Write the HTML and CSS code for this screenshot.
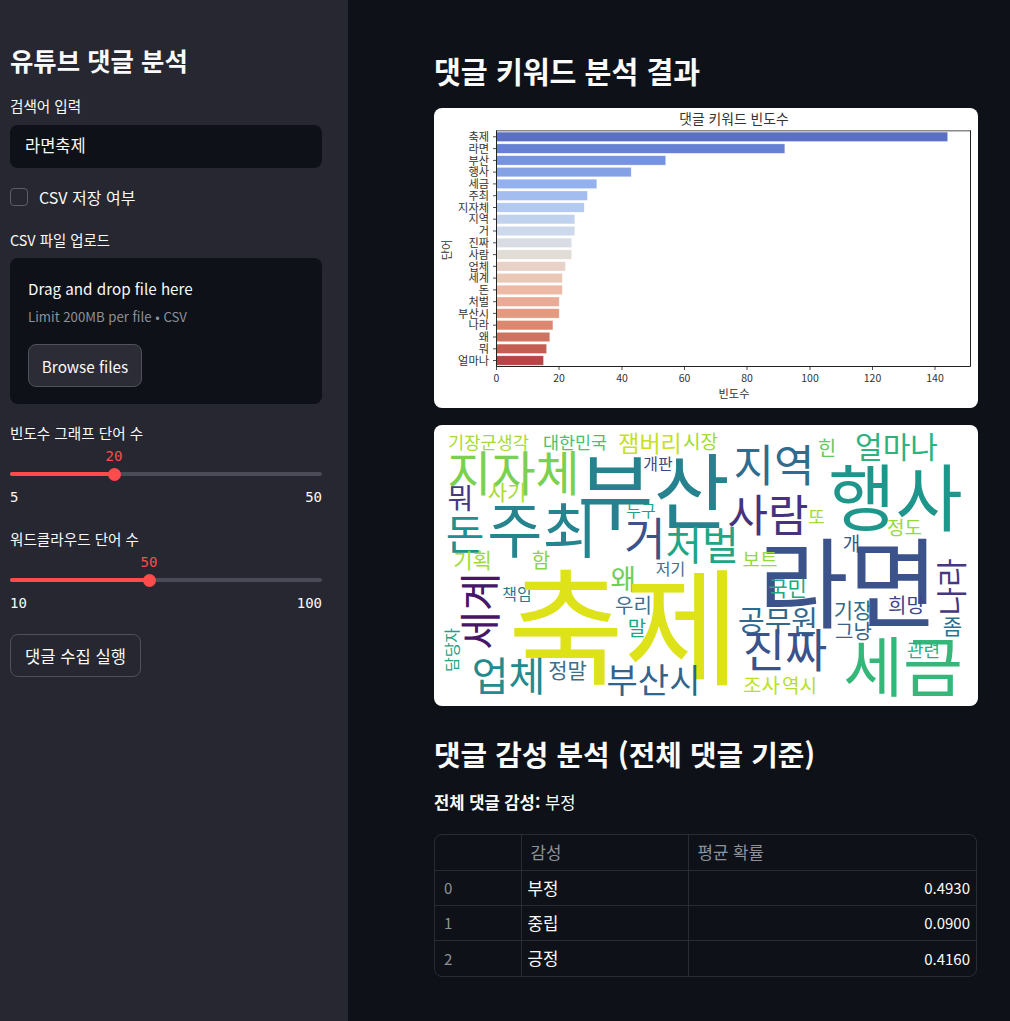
FILE: index.html
```html
<!DOCTYPE html>
<html lang="ko">
	<head>
		<meta charset="UTF-8">
		<title>유튜브 댓글 분석</title>
		<link rel="stylesheet" href="styles.css">
	</head>
	<body>
		<aside class="sidebar">
			<h2 class="side-title">유튜브 댓글 분석</h2>

			<label class="field-label label-search">검색어 입력</label>
			<div class="text-input">라면축제</div>

			<div class="check-row">
				<span class="check-box"></span>
				<span>CSV 저장 여부</span>
			</div>

			<label class="field-label label-upload">CSV 파일 업로드</label>
			<div class="uploader">
				<div class="drop-title">Drag and drop file here</div>
				<div class="drop-limit">Limit 200MB per file • CSV</div>
				<div class="btn btn-browse">Browse files</div>
			</div>

			<label class="field-label label-slider-a">빈도수 그래프 단어 수</label>
			<div class="slider">
				<div class="slider-value value-a">20</div>
				<div class="slider-track">
					<div class="slider-fill fill-a"><span class="slider-thumb"></span></div>
				</div>
				<div class="slider-range"><span>5</span><span>50</span></div>
			</div>

			<label class="field-label label-slider-b">워드클라우드 단어 수</label>
			<div class="slider">
				<div class="slider-value value-b">50</div>
				<div class="slider-track">
					<div class="slider-fill fill-b"><span class="slider-thumb"></span></div>
				</div>
				<div class="slider-range"><span>10</span><span>100</span></div>
			</div>

			<div class="btn btn-run">댓글 수집 실행</div>
		</aside>

		<main class="content">
			<h1 class="page-title">댓글 키워드 분석 결과</h1>

			<div class="figure figure-chart">
				<svg class="chart" viewBox="434 108 544 300" width="544" height="300">
					<text class="chart-title" x="734" y="124">댓글 키워드 빈도수</text>

					<g class="bars">
						<rect x="496.5" y="132.1" width="451.2" height="9.4" fill="#5b70c4"/>
						<rect x="496.5" y="143.9" width="288.3" height="9.4" fill="#6680d3"/>
						<rect x="496.5" y="155.7" width="169.2" height="9.4" fill="#7593e1"/>
						<rect x="496.5" y="167.4" width="134.7" height="9.4" fill="#85a1e6"/>
						<rect x="496.5" y="179.2" width="100.3" height="9.4" fill="#93b1ee"/>
						<rect x="496.5" y="191" width="90.9" height="9.4" fill="#a3bdf0"/>
						<rect x="496.5" y="202.8" width="87.7" height="9.4" fill="#b2c9f1"/>
						<rect x="496.5" y="214.5" width="78.3" height="9.4" fill="#c1d2ee"/>
						<rect x="496.5" y="226.3" width="78.3" height="9.4" fill="#cdd9ea"/>
						<rect x="496.5" y="238.1" width="75.2" height="9.4" fill="#d9dde3"/>
						<rect x="496.5" y="249.9" width="75.2" height="9.4" fill="#e2dcd7"/>
						<rect x="496.5" y="261.6" width="68.9" height="9.4" fill="#e8d1c6"/>
						<rect x="496.5" y="273.4" width="65.8" height="9.4" fill="#e9c8b6"/>
						<rect x="496.5" y="285.2" width="65.8" height="9.4" fill="#ecbaa4"/>
						<rect x="496.5" y="297" width="62.7" height="9.4" fill="#e8ab95"/>
						<rect x="496.5" y="308.7" width="62.7" height="9.4" fill="#e49a80"/>
						<rect x="496.5" y="320.5" width="56.4" height="9.4" fill="#dc8871"/>
						<rect x="496.5" y="332.3" width="53.3" height="9.4" fill="#cf7361"/>
						<rect x="496.5" y="344.1" width="50.1" height="9.4" fill="#c45e52"/>
						<rect x="496.5" y="355.8" width="47" height="9.4" fill="#b64548"/>
					</g>

					<path class="spine-top" d="M496 130.8H971"/>
					<path class="spine" d="M496.5 130.5V366.5H970.5V130.5"/>
					<path class="ticks" d="M493 136.8h3M493 148.6h3M493 160.4h3M493 172.1h3M493 183.9h3M493 195.7h3M493 207.5h3M493 219.2h3M493 231h3M493 242.8h3M493 254.6h3M493 266.3h3M493 278.1h3M493 289.9h3M493 301.7h3M493 313.4h3M493 325.2h3M493 337h3M493 348.8h3M493 360.5h3M496.5 366v4M559 366v4M622 366v4M684.5 366v4M747 366v4M810 366v4M872.5 366v4M935 366v4"/>

					<g class="y-labels">
						<text x="489" y="141">축제</text>
						<text x="489" y="152.8">라면</text>
						<text x="489" y="164.6">부산</text>
						<text x="489" y="176.3">행사</text>
						<text x="489" y="188.1">세금</text>
						<text x="489" y="199.9">주최</text>
						<text x="489" y="211.7">지자체</text>
						<text x="489" y="223.4">지역</text>
						<text x="489" y="235.2">거</text>
						<text x="489" y="247">진짜</text>
						<text x="489" y="258.8">사람</text>
						<text x="489" y="270.5">업체</text>
						<text x="489" y="282.3">세계</text>
						<text x="489" y="294.1">돈</text>
						<text x="489" y="305.9">처벌</text>
						<text x="489" y="317.6">부산시</text>
						<text x="489" y="329.4">나라</text>
						<text x="489" y="341.2">왜</text>
						<text x="489" y="353">뭐</text>
						<text x="489" y="364.7">얼마나</text>
					</g>

					<g class="x-labels">
						<text x="496.5" y="382">0</text>
						<text x="559" y="382">20</text>
						<text x="622" y="382">40</text>
						<text x="684.5" y="382">60</text>
						<text x="747" y="382">80</text>
						<text x="810" y="382">100</text>
						<text x="872.5" y="382">120</text>
						<text x="935" y="382">140</text>
					</g>

					<text class="axis-label" x="734" y="398">빈도수</text>
					<text class="axis-label" transform="translate(451 250) rotate(-90)">단어</text>
				</svg>
			</div>

			<div class="figure figure-cloud">
				<svg class="cloud" viewBox="434 425 544 281" width="544" height="281">
					<text x="488.5" y="449" font-size="17.6" fill="#a5db36">기장군생각</text>
					<text x="575" y="449" font-size="17.4" fill="#4ac16d">대한민국</text>
					<text x="650" y="452" font-size="23" fill="#c8e020">잼버리</text>
					<text x="700.5" y="449" font-size="19" fill="#a0da39">시장</text>
					<text x="513.5" y="491" font-size="48" fill="#7ad151">지자체</text>
					<text x="653.5" y="523" font-size="83" fill="#26828e">부산</text>
					<text x="774" y="482" font-size="44" fill="#2f6c8e">지역</text>
					<text x="827" y="456" font-size="20" fill="#5ec962">힌</text>
					<text x="896.5" y="458" font-size="30" fill="#2db27d">얼마나</text>
					<text x="895.5" y="525" font-size="73" fill="#1f968b">행사</text>
					<text x="768" y="532" font-size="44" fill="#46337f">사람</text>
					<text x="816.5" y="524" font-size="18" fill="#a0da39">또</text>
					<text x="904.5" y="535" font-size="19" fill="#95d840">정도</text>
					<text x="851.5" y="551" font-size="19" fill="#39558c">개</text>
					<text x="702" y="560" font-size="40" fill="#21a585">처벌</text>
					<text x="645" y="556" font-size="45" fill="#3b528b">거</text>
					<text x="641" y="517" font-size="16" fill="#1fa187">누구</text>
					<text x="658" y="470" font-size="16" fill="#3e4989">개판</text>
					<text x="507" y="500" font-size="21" fill="#a8db34">사기</text>
					<text x="460.5" y="509" font-size="28" fill="#443a83">뭐</text>
					<text x="465" y="550" font-size="42" fill="#218f8d">돈</text>
					<text x="542.5" y="553" font-size="60" fill="#25848e">주최</text>
					<text x="472.5" y="568" font-size="21" fill="#a2da37">기획</text>
					<text x="541" y="568" font-size="20" fill="#86d549">함</text>
					<text x="623.5" y="590" font-size="28" fill="#6ece58">왜</text>
					<text x="670.5" y="575" font-size="16" fill="#3e6f8e">저기</text>
					<text transform="translate(496 611) rotate(-90)" font-size="42" fill="#481668">세계</text>
					<text x="517" y="600" font-size="16" fill="#2a788e">책임</text>
					<text x="624" y="675" font-size="126" fill="#dde318">축제</text>
					<text x="633.5" y="613" font-size="20" fill="#3b6f8e">우리</text>
					<text x="637" y="636" font-size="20" fill="#20a486">말</text>
					<text transform="translate(458 650) rotate(-90)" font-size="16" fill="#1fa187">담당자</text>
					<text x="508.5" y="691" font-size="40" fill="#238a8d">업체</text>
					<text x="567.5" y="678" font-size="21" fill="#3f6e8d">정말</text>
					<text x="653.5" y="693" font-size="34" fill="#32658e">부산시</text>
					<text x="848.5" y="620" font-size="98" fill="#3b528b">라면</text>
					<text x="787.5" y="596" font-size="21" fill="#22a884">국민</text>
					<text x="853" y="618" font-size="21" fill="#2f6c8e">기장</text>
					<text x="906.5" y="613" font-size="20" fill="#414487">희망</text>
					<text x="760" y="567" font-size="19" fill="#95d840">보트</text>
					<text x="778" y="632" font-size="29" fill="#31688e">공무원</text>
					<text x="853.5" y="639" font-size="20" fill="#39628c">그냥</text>
					<text transform="translate(963 587) rotate(-90)" font-size="31" fill="#453781">나라</text>
					<text x="952.5" y="634" font-size="21" fill="#2c728e">좀</text>
					<text x="785" y="667" font-size="46" fill="#3b528b">진짜</text>
					<text x="903" y="691" font-size="65" fill="#35b779">세금</text>
					<text x="923.5" y="657" font-size="18" fill="#29af7f">관련</text>
					<text x="761.5" y="693" font-size="20" fill="#bddf26">조사</text>
					<text x="799.5" y="693" font-size="19" fill="#b5de2b">역시</text>
				</svg>
			</div>

			<h2 class="section-title">댓글 감성 분석 (전체 댓글 기준)</h2>
			<p class="summary"><strong>전체 댓글 감성:</strong> 부정</p>

			<div class="table-wrap">
				<table class="result-table">
					<thead>
						<tr>
							<th class="col-index"></th>
							<th class="col-name">감성</th>
							<th>평균 확률</th>
						</tr>
					</thead>
					<tbody>
						<tr><td class="row-index">0</td><td>부정</td><td class="num">0.4930</td></tr>
						<tr><td class="row-index">1</td><td>중립</td><td class="num">0.0900</td></tr>
						<tr><td class="row-index">2</td><td>긍정</td><td class="num">0.4160</td></tr>
					</tbody>
				</table>
			</div>
		</main>
	</body>
</html>
```

FILE: styles.css
```css
* {
	margin: 0;
	padding: 0;
	box-sizing: border-box;
}

body {
	display: flex;
	min-height: 1021px;
	background: #0e1117;
	color: #fafafa;
	font-family: "Noto Sans CJK KR", "Noto Sans", sans-serif;
	font-size: 16px;
	overflow: hidden;
}

/* sidebar */
.sidebar {
	width: 348px;
	height: 1021px;
	flex: none;
	padding: 43px 26px 0 10px;
	background: #262730;
}

.side-title {
	font-size: 25.4px;
	line-height: 34px;
	font-weight: 700;
}

.field-label {
	display: block;
	font-size: 14.6px;
	line-height: 20px;
}

.label-search {
	margin-top: 19px;
}

.text-input {
	height: 43px;
	margin-top: 9px;
	padding-left: 15px;
	background: #0e1117;
	border-radius: 8px;
	font-size: 16.5px;
	line-height: 41px;
}

.check-row {
	display: flex;
	align-items: center;
	gap: 11px;
	height: 18px;
	margin-top: 20px;
	line-height: 18px;
}

.check-box {
	width: 18px;
	height: 18px;
	background: #262730;
	border: 1px solid #5c5e68;
	border-radius: 4px;
}

.label-upload {
	margin-top: 24px;
	font-size: 14.4px;
}

.uploader {
	height: 146px;
	margin-top: 8px;
	padding: 17px 18px 0;
	background: #0e1117;
	border-radius: 8px;
}

.drop-title {
	font-size: 15.2px;
	line-height: 26px;
}

.drop-limit {
	margin-top: 6px;
	color: #8f9198;
	font-size: 13.2px;
	line-height: 20px;
}

.btn {
	display: flex;
	align-items: center;
	justify-content: center;
	height: 43px;
	background: #2b2c36;
	border: 1px solid #50525b;
	border-radius: 8px;
}

.btn-browse {
	width: 114px;
	margin-top: 17px;
	font-size: 15.3px;
}

.btn-run {
	width: 131px;
	margin-top: 21px;
	background: #262730;
	font-size: 16.6px;
}

.label-slider-a {
	margin-top: 19px;
}

.label-slider-b {
	margin-top: 22px;
}

.slider {
	margin-top: 4px;
	font-family: "DejaVu Sans Mono", "Liberation Mono", monospace;
	font-size: 14px;
}

.slider-value {
	height: 19px;
	line-height: 19px;
	color: #ff4b4b;
	text-align: center;
}

.value-a {
	width: 208px;
}

.value-b {
	width: 278px;
}

.slider-track {
	height: 4px;
	margin-top: 6px;
	background: #4a4b57;
	border-radius: 2px;
}

.slider-fill {
	position: relative;
	height: 4px;
	background: #ff4b4b;
	border-radius: 2px;
}

.fill-a {
	width: 104px;
}

.fill-b {
	width: 139px;
}

.slider-thumb {
	position: absolute;
	right: -6.5px;
	top: -4.5px;
	width: 13px;
	height: 13px;
	background: #ff4b4b;
	border-radius: 50%;
}

.slider-range {
	display: flex;
	justify-content: space-between;
	margin-top: 11px;
	line-height: 20px;
}

/* main column */
.content {
	flex: 1;
	padding: 48px 32px 0 86px;
}

.page-title {
	font-size: 29.2px;
	line-height: 44px;
	font-weight: 700;
}

.figure {
	width: 544px;
	background: #fff;
	border-radius: 8px;
	overflow: hidden;
}

.figure svg {
	display: block;
}

.figure-chart {
	height: 300px;
	margin-top: 16px;
}

.figure-cloud {
	height: 281px;
	margin-top: 17px;
}

.chart text {
	fill: #333;
	font-size: 10.5px;
}

.chart .chart-title {
	font-size: 13.8px;
	text-anchor: middle;
}

.chart .y-labels text,
.chart .axis-label {
	font-size: 11.2px;
}

.bars rect {
	stroke: #fff;
	stroke-opacity: 0.5;
	stroke-width: 0.6;
}

.spine {
	fill: none;
	stroke: #222;
	stroke-width: 1;
}

.spine-top {
	stroke: #888;
	stroke-width: 1.5;
}

.ticks {
	stroke: #222;
	stroke-width: 0.8;
}

.y-labels text {
	text-anchor: end;
}

.x-labels text,
.axis-label {
	text-anchor: middle;
}

.cloud text {
	text-anchor: middle;
}

.section-title {
	margin-top: 26px;
	font-size: 28.9px;
	line-height: 42px;
	font-weight: 700;
}

.summary {
	margin-top: 15px;
	font-size: 16.6px;
	line-height: 26px;
}

.table-wrap {
	width: 543px;
	margin-top: 19px;
	border: 1px solid #2a2c33;
	border-radius: 8px;
	overflow: hidden;
}

.result-table {
	width: 100%;
	border-collapse: collapse;
	table-layout: fixed;
	font-size: 16.8px;
}

.result-table th,
.result-table td {
	height: 35.2px;
	border-left: 1px solid #2a2c33;
	border-top: 1px solid #2a2c33;
	padding: 0 6px;
	text-align: left;
	font-weight: 400;
}

.result-table th:first-child,
.result-table td:first-child {
	border-left: 0;
	padding-left: 9px;
}

.result-table thead th {
	border-top: 0;
	padding-left: 9px;
	color: #8f9198;
}

.col-index {
	width: 86px;
}

.col-name {
	width: 167px;
}

.result-table .row-index {
	color: #8f9198;
	font-size: 15px;
}

.result-table .num {
	text-align: right;
	font-size: 15px;
}
```
